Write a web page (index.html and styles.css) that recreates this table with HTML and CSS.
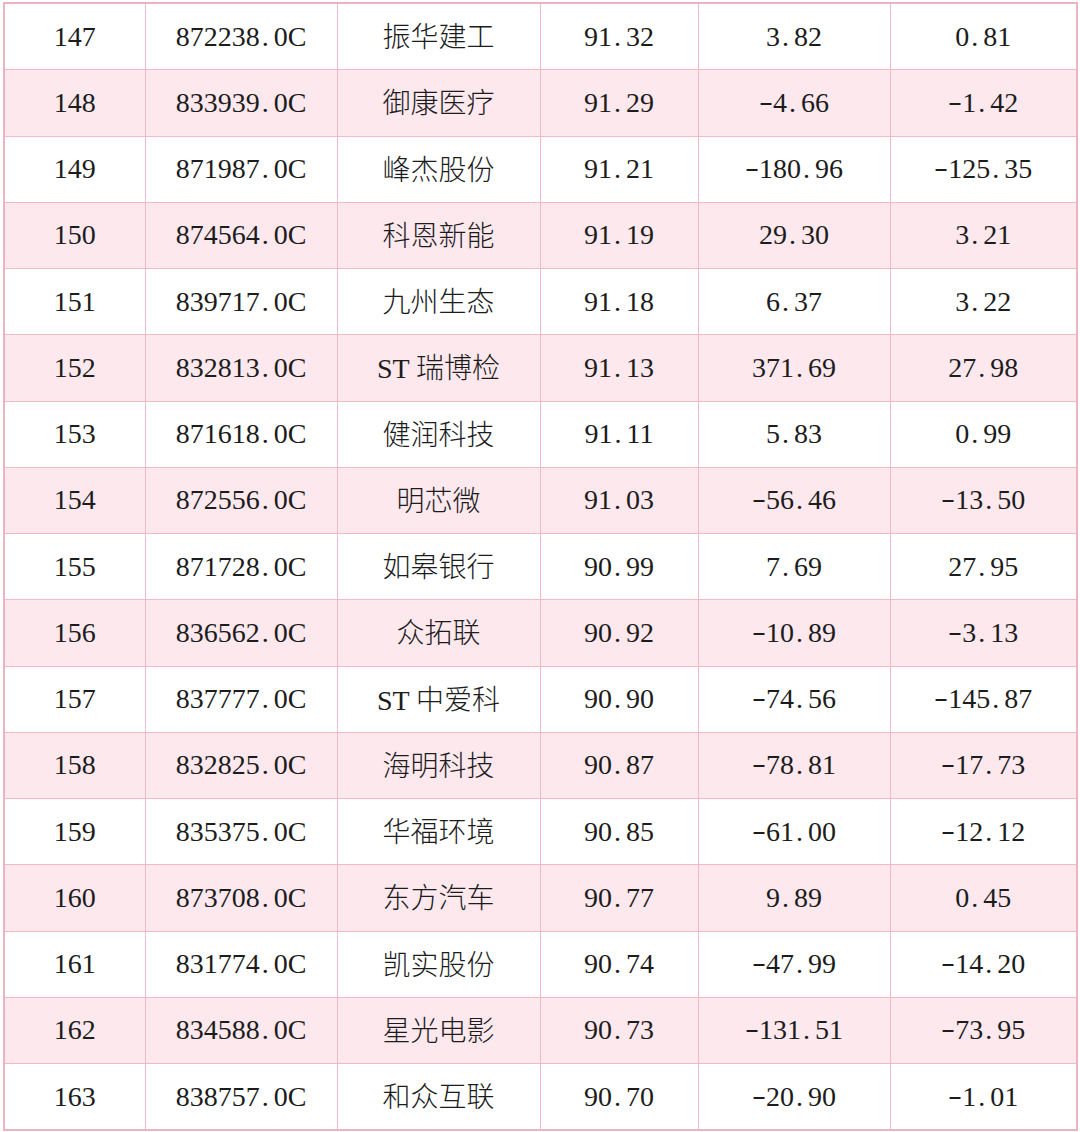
FILE: index.html
```html
<!DOCTYPE html>
<html lang="zh-CN">
<head>
<meta charset="utf-8">
<title>表格</title>
<link rel="stylesheet" href="styles.css">
</head>
<body>
<table class="data">
<colgroup>
<col class="c1"><col class="c2"><col class="c3"><col class="c4"><col class="c5"><col class="c6">
</colgroup>
<tbody>
<tr><td>147</td><td>872238<span class="dot">.</span>0C</td><td class="cn">振华建工</td><td>91<span class="dot">.</span>32</td><td>3<span class="dot">.</span>82</td><td>0<span class="dot">.</span>81</td></tr>
<tr><td>148</td><td>833939<span class="dot">.</span>0C</td><td class="cn">御康医疗</td><td>91<span class="dot">.</span>29</td><td><span class="neg">-</span>4<span class="dot">.</span>66</td><td><span class="neg">-</span>1<span class="dot">.</span>42</td></tr>
<tr><td>149</td><td>871987<span class="dot">.</span>0C</td><td class="cn">峰杰股份</td><td>91<span class="dot">.</span>21</td><td><span class="neg">-</span>180<span class="dot">.</span>96</td><td><span class="neg">-</span>125<span class="dot">.</span>35</td></tr>
<tr><td>150</td><td>874564<span class="dot">.</span>0C</td><td class="cn">科恩新能</td><td>91<span class="dot">.</span>19</td><td>29<span class="dot">.</span>30</td><td>3<span class="dot">.</span>21</td></tr>
<tr><td>151</td><td>839717<span class="dot">.</span>0C</td><td class="cn">九州生态</td><td>91<span class="dot">.</span>18</td><td>6<span class="dot">.</span>37</td><td>3<span class="dot">.</span>22</td></tr>
<tr><td>152</td><td>832813<span class="dot">.</span>0C</td><td class="cn">ST 瑞博检</td><td>91<span class="dot">.</span>13</td><td>371<span class="dot">.</span>69</td><td>27<span class="dot">.</span>98</td></tr>
<tr><td>153</td><td>871618<span class="dot">.</span>0C</td><td class="cn">健润科技</td><td>91<span class="dot">.</span>11</td><td>5<span class="dot">.</span>83</td><td>0<span class="dot">.</span>99</td></tr>
<tr><td>154</td><td>872556<span class="dot">.</span>0C</td><td class="cn">明芯微</td><td>91<span class="dot">.</span>03</td><td><span class="neg">-</span>56<span class="dot">.</span>46</td><td><span class="neg">-</span>13<span class="dot">.</span>50</td></tr>
<tr><td>155</td><td>871728<span class="dot">.</span>0C</td><td class="cn">如皋银行</td><td>90<span class="dot">.</span>99</td><td>7<span class="dot">.</span>69</td><td>27<span class="dot">.</span>95</td></tr>
<tr><td>156</td><td>836562<span class="dot">.</span>0C</td><td class="cn">众拓联</td><td>90<span class="dot">.</span>92</td><td><span class="neg">-</span>10<span class="dot">.</span>89</td><td><span class="neg">-</span>3<span class="dot">.</span>13</td></tr>
<tr><td>157</td><td>837777<span class="dot">.</span>0C</td><td class="cn">ST 中爱科</td><td>90<span class="dot">.</span>90</td><td><span class="neg">-</span>74<span class="dot">.</span>56</td><td><span class="neg">-</span>145<span class="dot">.</span>87</td></tr>
<tr><td>158</td><td>832825<span class="dot">.</span>0C</td><td class="cn">海明科技</td><td>90<span class="dot">.</span>87</td><td><span class="neg">-</span>78<span class="dot">.</span>81</td><td><span class="neg">-</span>17<span class="dot">.</span>73</td></tr>
<tr><td>159</td><td>835375<span class="dot">.</span>0C</td><td class="cn">华福环境</td><td>90<span class="dot">.</span>85</td><td><span class="neg">-</span>61<span class="dot">.</span>00</td><td><span class="neg">-</span>12<span class="dot">.</span>12</td></tr>
<tr><td>160</td><td>873708<span class="dot">.</span>0C</td><td class="cn">东方汽车</td><td>90<span class="dot">.</span>77</td><td>9<span class="dot">.</span>89</td><td>0<span class="dot">.</span>45</td></tr>
<tr><td>161</td><td>831774<span class="dot">.</span>0C</td><td class="cn">凯实股份</td><td>90<span class="dot">.</span>74</td><td><span class="neg">-</span>47<span class="dot">.</span>99</td><td><span class="neg">-</span>14<span class="dot">.</span>20</td></tr>
<tr><td>162</td><td>834588<span class="dot">.</span>0C</td><td class="cn">星光电影</td><td>90<span class="dot">.</span>73</td><td><span class="neg">-</span>131<span class="dot">.</span>51</td><td><span class="neg">-</span>73<span class="dot">.</span>95</td></tr>
<tr><td>163</td><td>838757<span class="dot">.</span>0C</td><td class="cn">和众互联</td><td>90<span class="dot">.</span>70</td><td><span class="neg">-</span>20<span class="dot">.</span>90</td><td><span class="neg">-</span>1<span class="dot">.</span>01</td></tr>
</tbody>
</table>
</body>
</html>
```
FILE: styles.css
```css
html, body {
  margin: 0;
  padding: 0;
  background: #ffffff;
}
body {
  width: 1080px;
  height: 1132px;
  overflow: hidden;
  padding-top: 2px;
  padding-left: 3px;
  box-sizing: border-box;
}
.data {
  border-collapse: collapse;
  table-layout: fixed;
  width: 1073px;
  border: 2px solid #ecb4c1;
  font-family: "Liberation Serif", "Noto Sans CJK SC", serif;
  font-size: 28px;
  color: #1c1c1c;
}
.c1 { width: 141px; }
.c2 { width: 192px; }
.c3 { width: 203px; }
.c4 { width: 158px; }
.c5 { width: 192px; }
.c6 { width: 187px; }
.data td {
  height: 65.25px;
  padding: 0;
  border: 1px solid #f0bac6;
  text-align: center;
  vertical-align: middle;
  line-height: 1;
  white-space: nowrap;
}
.data td.cn {
  font-family: "Liberation Serif", "Noto Sans CJK SC", sans-serif;
  font-weight: 300;
  height: 62.25px;
  padding-top: 3px;
}
.data tr:nth-child(even) td {
  background: #fde8ee;
}
.dot {
  display: inline-block;
  width: 14px;
  text-align: left;
  padding-left: 2px;
  box-sizing: border-box;
}
.neg {
  display: inline-block;
  width: 14px;
  text-align: center;
  transform: translateY(-2px) scaleX(1.5);
}
```
